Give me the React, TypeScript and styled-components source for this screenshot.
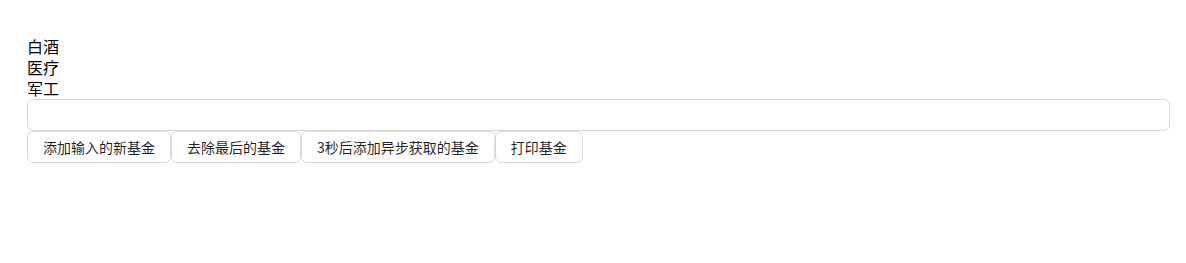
import * as React from 'react';
import styled, { createGlobalStyle } from 'styled-components';

const GlobalStyle = createGlobalStyle`
  html, body {
    margin: 0;
    padding: 0;
    background: #ffffff;
  }
  body {
    font-family: "Noto Sans CJK SC", "Noto Sans", sans-serif;
    color: #000000;
  }
`;

const Page = styled.div`
  padding: 36px 16px 0 27px;
`;

const FundList = styled.ul`
  list-style: none;
  margin: 0;
  padding: 0;
`;

const FundItem = styled.li`
  font-size: 16px;
  line-height: 21px;
  height: 21px;
`;

const FundInput = styled.input`
  display: block;
  box-sizing: border-box;
  width: 100%;
  height: 32px;
  margin: 0;
  padding: 4px 11px;
  border: 1px solid #d9d9d9;
  border-radius: 6px;
  font: 14px "Noto Sans CJK SC", "Noto Sans", sans-serif;
  outline: none;
  background: #fff;
`;

const Toolbar = styled.div`
  display: flex;
`;

const Button = styled.button`
  box-sizing: border-box;
  height: 32px;
  margin: 0;
  padding: 0 15px;
  border: 1px solid #d9d9d9;
  border-radius: 6px;
  background: #fff;
  color: rgba(0, 0, 0, 0.88);
  font: 14px/1 "Noto Sans CJK SC", "Noto Sans", sans-serif;
  white-space: nowrap;
  cursor: pointer;
`;

export default function App() {
  const [funds, setFunds] = React.useState<string[]>(['白酒', '医疗', '军工']);
  const [value, setValue] = React.useState('');

  const addFund = () => {
    if (!value) return;
    setFunds([...funds, value]);
    setValue('');
  };

  const removeLast = () => setFunds(funds.slice(0, -1));

  const addLater = () => {
    setTimeout(() => setFunds(f => [...f, '新能源']), 3000);
  };

  const printFunds = () => console.log(funds);

  return (
    <>
      <GlobalStyle />
      <Page>
        <FundList>
          {funds.map((f, i) => (
            <FundItem key={i}>{f}</FundItem>
          ))}
        </FundList>
        <FundInput value={value} onChange={e => setValue(e.target.value)} />
        <Toolbar>
          <Button onClick={addFund}>添加输入的新基金</Button>
          <Button onClick={removeLast}>去除最后的基金</Button>
          <Button onClick={addLater}>3秒后添加异步获取的基金</Button>
          <Button onClick={printFunds}>打印基金</Button>
        </Toolbar>
      </Page>
    </>
  );
}
